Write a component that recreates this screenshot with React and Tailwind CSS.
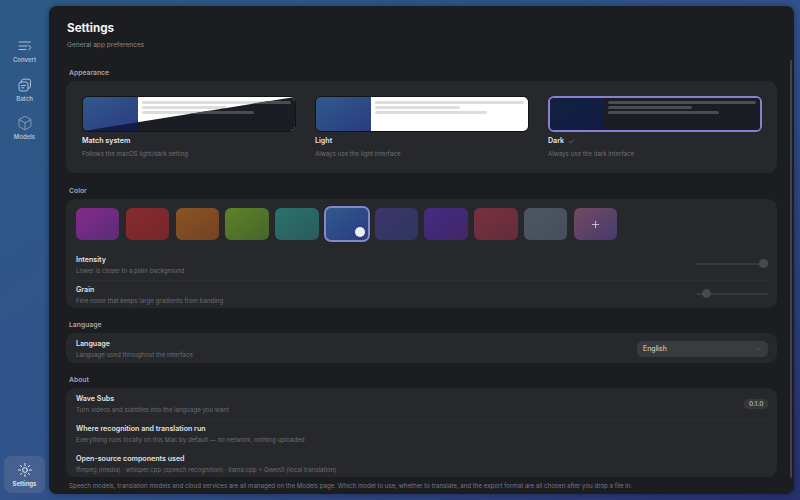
import React from 'react'
import { Box, Check, ChevronDown, Plus } from 'lucide-react'

const ConvertIcon = () => (
  <svg width="16" height="16" viewBox="0 0 16 16" fill="none" stroke="currentColor" strokeWidth="1" strokeLinecap="round" strokeLinejoin="round">
    <path d="M2 4h11.5" />
    <path d="M2 8h8" />
    <path d="M2 11.5h7" />
    <path d="M11.5 7l2.5 2.5-2.5 2.5" />
  </svg>
)

const BatchIcon = () => (
  <svg width="16" height="16" viewBox="0 0 16 16" fill="none" stroke="currentColor" strokeWidth="1" strokeLinecap="round" strokeLinejoin="round">
    <rect x="2" y="5" width="9" height="9" rx="2" />
    <path d="M4.5 5V4.2a2 2 0 0 1 2-2h5a2 2 0 0 1 2 2v5a2 2 0 0 1-2 2H11" />
    <path d="M4.5 8.5h4" />
    <path d="M4.5 10.8h2.5" />
  </svg>
)

const SettingsIcon = () => (
  <svg width="16" height="16" viewBox="0 0 16 16" fill="none" stroke="currentColor" strokeWidth="1" strokeLinecap="round">
    <circle cx="8" cy="8" r="2.4" />
    <path d="M8 1.5v2M8 12.5v2M1.5 8h2M12.5 8h2M3.4 3.4l1.4 1.4M11.2 11.2l1.4 1.4M3.4 12.6l1.4-1.4M11.2 4.8l1.4-1.4" />
  </svg>
)

const NavItem = ({ icon, label }) => (
  <div className="flex h-[38.5px] flex-col items-center pt-[6px] text-[#aebfd3]">
    {icon}
    <span className="mt-[2px] text-[6px] leading-[8px] font-semibold">{label}</span>
  </div>
)

const Preview = ({ kind }) => {
  const selected = kind === 'dark'
  let frame = 'border border-[#121317]'
  let side = 'bg-gradient-to-br from-[#2f5a8c] to-[#2c3a80]'
  let body = 'bg-white'
  let bar = 'bg-[#dddddd]'
  if (kind === 'dark') {
    frame = 'border-2 border-[#8a80cf]'
    side = 'bg-gradient-to-br from-[#11223f] to-[#131a46]'
    body = 'bg-[#1b1d25]'
    bar = 'bg-[#4b4d52]'
  }
  return (
    <div className={`relative h-[36px] overflow-hidden rounded-[6px] ${frame}`}>
      <div className="flex h-full">
        <div className={`${selected ? 'w-[54px]' : 'w-[55px]'} ${side}`} />
        <div className={`flex flex-1 flex-col gap-[2.5px] px-[4px] ${selected ? 'pt-[3px]' : 'pt-[4px]'} ${body}`}>
          <div className={`h-[2.5px] w-full rounded-full ${bar}`} />
          <div className={`h-[2.5px] w-[57%] rounded-full ${bar}`} />
          <div className={`h-[2.5px] w-[75%] rounded-full ${bar}`} />
        </div>
      </div>
      {kind === 'system' && (
        <div className="absolute inset-0 flex [clip-path:polygon(0_100%,100%_0,100%_100%)]">
          <div className="w-[55px] bg-gradient-to-br from-[#11223f] to-[#131a46]" />
          <div className="flex flex-1 flex-col gap-[2.5px] bg-[#1b1d25] px-[4px] pt-[4px]">
            <div className="h-[2.5px] w-full rounded-full bg-[#4b4d52]" />
            <div className="h-[2.5px] w-[57%] rounded-full bg-[#4b4d52]" />
            <div className="h-[2.5px] w-[75%] rounded-full bg-[#4b4d52]" />
          </div>
        </div>
      )}
    </div>
  )
}

const ThemeOption = ({ kind, title, sub, checked }) => (
  <div className="w-[214px]">
    <Preview kind={kind} />
    <div className="mt-[4px] flex h-[10px] items-center gap-[4px] text-[7.1px] leading-[10px] font-semibold text-[#e6e6e8]">
      {title}
      {checked && <Check size={7} strokeWidth={2} className="text-[#8a80cf]" />}
    </div>
    <div className="mt-[3px] text-[6.15px] leading-[10px] text-[#6e7076]">{sub}</div>
  </div>
)

const swatches = [
  'from-[#85298d] to-[#5a2c76]',
  'from-[#872b2d] to-[#75272b]',
  'from-[#885523] to-[#754123]',
  'from-[#5e8229] to-[#466629]',
  'from-[#2c7270] to-[#2a5a5c]',
  'from-[#2f5a8c] to-[#2c3a80]',
  'from-[#40346a] to-[#2c3660]',
  'from-[#432c84] to-[#422666]',
  'from-[#783040] to-[#642c3c]',
  'from-[#4c5560] to-[#474f5a]',
  'from-[#744862] to-[#463b6c]',
]

const Swatch = ({ color, index }) => {
  if (index === 5) {
    return (
      <div className={`relative -my-[2px] -mr-[1.6px] -ml-[1px] h-[36px] w-[46px] rounded-[7px] border-2 border-[#7f8ac6] bg-gradient-to-br ${color}`}>
        <div className="absolute right-[3px] bottom-[3px] h-[10px] w-[10px] rounded-full bg-[#eeeef2]" />
      </div>
    )
  }
  return (
    <div className={`flex h-[32px] w-[43.4px] items-center justify-center rounded-[6px] bg-gradient-to-br ${color}`}>
      {index === 10 && <Plus size={11} strokeWidth={1.5} className="text-[#f0edf2]" />}
    </div>
  )
}

const Row = ({ title, sub, children, border }) => (
  <div className={`flex h-[29.5px] items-center justify-between ${border ? 'border-b border-[#2d2f33]' : ''}`}>
    <div>
      <div className="text-[7.1px] leading-[10px] font-semibold text-[#e2e2e4]">{title}</div>
      <div className="mt-[1px] text-[6.15px] leading-[9px] text-[#6c6e74]">{sub}</div>
    </div>
    {children}
  </div>
)

const Slider = ({ left }) => (
  <div className="relative -mt-[3px] h-[2px] w-[72px] rounded-full bg-[#38393d]">
    <div className={`absolute -top-[3.5px] h-[9px] w-[9px] rounded-full bg-[#48494d] ${left}`} />
  </div>
)

const SectionLabel = ({ children }) => (
  <div className="mb-[2px] h-[14px] pl-[3px] text-[6.8px] leading-[16px] font-semibold text-[#a4a5a9]">{children}</div>
)

export default function App() {
  return (
    <div className="flex h-[500px] w-[800px] overflow-hidden bg-gradient-to-br from-[#2c5a86] via-[#31528b] to-[#28306e] font-['Inter',sans-serif] antialiased">
      <div className="flex w-[49px] shrink-0 flex-col px-[4px] pt-[32px] pb-[7px]">
        <NavItem icon={<ConvertIcon />} label="Convert" />
        <NavItem icon={<BatchIcon />} label="Batch" />
        <NavItem icon={<Box size={16} strokeWidth={1} />} label="Models" />
        <div className="mt-auto flex h-[37px] w-[41px] flex-col items-center justify-center gap-[2px] rounded-[7px] bg-[#46618f] text-[#e4e9f2]">
          <SettingsIcon />
          <span className="text-[6px] leading-[8px] font-semibold">Settings</span>
        </div>
      </div>

      <div className="relative my-[6px] flex h-[488px] w-[745px] flex-col rounded-[8px] bg-[#1c1d21] px-[17px] shadow-[0_0_6px_rgba(0,0,0,0.35)]">
        <div className="absolute top-[54px] right-[2px] bottom-[16px] w-[2px] rounded-full bg-[#434448]" />

        <h1 className="mt-[14px] pl-[1px] text-[11.7px] leading-[17px] font-bold text-[#f2f2f3]">Settings</h1>
        <p className="mt-[3px] pl-[1px] text-[6.6px] leading-[10px] text-[#88898e]">General app preferences</p>

        <div className="mt-[15px]">
          <SectionLabel>Appearance</SectionLabel>
          <div className="flex h-[92px] gap-[19px] rounded-[9px] bg-[#27282c] pt-[15px] pr-[15px] pl-[16px]">
            <ThemeOption kind="system" title="Match system" sub="Follows the macOS light/dark setting" />
            <ThemeOption kind="light" title="Light" sub="Always use the light interface" />
            <ThemeOption kind="dark" title="Dark" sub="Always use the dark interface" checked />
          </div>
        </div>

        <div className="mt-[10px]">
          <SectionLabel>Color</SectionLabel>
          <div className="h-[109px] rounded-[9px] bg-[#27282c] pt-[9px] pr-[9px] pl-[10px]">
            <div className="flex gap-[6.4px]">
              {swatches.map((c, i) => (
                <Swatch key={c} color={c} index={i} />
              ))}
            </div>
            <div className="mt-[11px]">
              <Row title="Intensity" sub="Lower is closer to a plain background" border>
                <Slider left="right-0" />
              </Row>
              <Row title="Grain" sub="Fine noise that keeps large gradients from banding">
                <Slider left="left-[6px]" />
              </Row>
            </div>
          </div>
        </div>

        <div className="mt-[9px]">
          <SectionLabel>Language</SectionLabel>
          <div className="h-[30px] rounded-[9px] bg-[#27282c] pt-[1px] pr-[9px] pl-[10px]">
            <Row title="Language" sub="Language used throughout the interface">
              <div className="flex h-[16px] w-[131px] items-center justify-between rounded-[6px] bg-[#3a3b3f] px-[6px] text-[7px] text-[#dcdcde]">
                English
                <ChevronDown size={8} strokeWidth={1.25} className="text-[#77797e]" />
              </div>
            </Row>
          </div>
        </div>

        <div className="mt-[9px]">
          <SectionLabel>About</SectionLabel>
          <div className="h-[89px] rounded-[9px] bg-[#27282c] pt-[2px] pr-[9px] pl-[10px]">
            <Row title="Wave Subs" sub="Turn videos and subtitles into the language you want" border>
              <div className="rounded-[4px] bg-[#36373b] px-[4.5px] py-[1px] text-[6.5px] leading-[8px] font-semibold text-[#a8a9ad]">0.1.0</div>
            </Row>
            <Row title="Where recognition and translation run" sub="Everything runs locally on this Mac by default — no network, nothing uploaded" />
            <Row title="Open-source components used" sub="ffmpeg (media) · whisper.cpp (speech recognition) · llama.cpp + Qwen3 (local translation)" />
          </div>
        </div>

        <p className="mt-[4px] pl-[3px] text-[6.15px] leading-[9px] whitespace-nowrap text-[#77797e]">
          Speech models, translation models and cloud services are all managed on the Models page. Which model to use, whether to translate, and the export format are all chosen after you drop a file in.
        </p>
      </div>
    </div>
  )
}
